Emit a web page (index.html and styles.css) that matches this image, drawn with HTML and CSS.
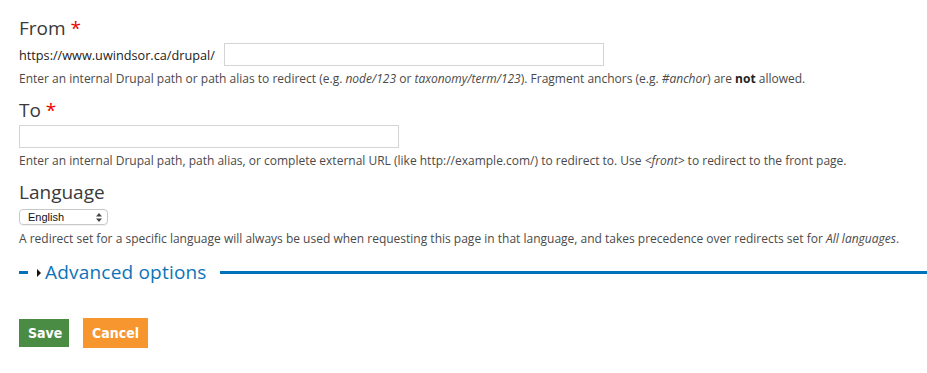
FILE: index.html
```html
<!DOCTYPE html>
<html>
<head>
<meta charset="utf-8">
<link rel="stylesheet" href="styles.css">
</head>
<body>
<form class="form">
  <div class="field">
    <label class="label">From <span class="req">*</span></label>
    <div class="prefix-row">
      <span class="prefix">https://www.uwindsor.ca/drupal/</span>
      <input class="text wide" type="text">
    </div>
    <div class="desc">Enter an internal Drupal path or path alias to redirect (e.g. <em>node/123</em> or <em>taxonomy/term/123</em>). Fragment anchors (e.g. <em>#anchor</em>) are <strong>not</strong> allowed.</div>
  </div>
  <div class="field">
    <label class="label">To <span class="req">*</span></label>
    <input class="text to" type="text">
    <div class="desc">Enter an internal Drupal path, path alias, or complete external URL (like http://example.com/) to redirect to. Use <em>&lt;front&gt;</em> to redirect to the front page.</div>
  </div>
  <div class="field">
    <label class="label">Language</label>
    <div class="select">
      <span>English</span>
      <svg width="6" height="9" viewBox="0 0 6 9"><path d="M3 0 L6 3.5 H0 Z M0 5.5 H6 L3 9 Z" fill="#444"/></svg>
    </div>
    <div class="desc lang-desc">A redirect set for a specific language will always be used when requesting this page in that language, and takes precedence over redirects set for <em>All languages</em>.</div>
  </div>
  <div class="advanced">
    <span class="dash"></span>
    <span class="tri"></span>
    <span class="adv-text">Advanced options</span>
    <span class="line"></span>
  </div>
  <div class="actions">
    <button type="button" class="btn save">Save</button>
    <button type="button" class="btn cancel">Cancel</button>
  </div>
</form>
</body>
</html>
```
FILE: styles.css
```css
html, body { margin: 0; padding: 0; background: #fff; }
body { font-family: "Open Sans", "Liberation Sans", sans-serif; color: #222; }
.form { padding: 15px 0 0 19px; }
.field { margin-bottom: 10px; }
.label { display: block; font-size: 19px; line-height: 26px; color: #3a3a3a; font-weight: 400; margin-bottom: 2px; }
.req { color: #e00; }
.prefix-row { display: flex; align-items: center; }
.prefix { font-size: 12.7px; color: #222; margin-right: 9px; white-space: nowrap; }
.text { box-sizing: border-box; height: 23px; border: 1px solid #d4d4d4; border-radius: 0; padding: 0 4px; margin: 0; font-size: 13px; outline: none; }
.wide { width: 380px; }
.to { width: 380px; display: block; }
.desc { font-size: 12px; line-height: 16px; color: #4a4a4a; margin-top: 5px; }
.lang-desc { margin-top: 6px; }
.desc strong { color: #222; }
.select { box-sizing: border-box; width: 89px; height: 16px; border: 1px solid #c8c8c8; border-radius: 4px; display: flex; align-items: center; justify-content: space-between; padding: 0 5px 0 8px; font-family: "Liberation Sans", Arial, sans-serif; font-size: 11px; color: #111; margin-top: 4px; box-shadow: 0 1px 1px rgba(0,0,0,0.06); }
.advanced { display: flex; align-items: center; margin-top: 11px; height: 28px; }
.dash { width: 9px; height: 3px; background: #0072ba; margin-right: 9px; }
.tri { width: 0; height: 0; border-left: 4px solid #111; border-top: 4px solid transparent; border-bottom: 4px solid transparent; margin-right: 4px; margin-top: 1px; }
.adv-text { font-size: 19px; color: #0c74b9; line-height: 28px; letter-spacing: 0.2px; }
.line { flex: 1; height: 3px; background: #0072ba; margin-left: 13px; }
.actions { display: flex; gap: 14px; margin-top: 33px; align-items: flex-start; }
.btn { border: none; color: #fff; font-family: "DejaVu Sans Condensed", "Open Sans", sans-serif; font-weight: bold; font-size: 14px; height: 28px; padding: 0 9px; margin: 0; cursor: pointer; }
.save { background: #4b8c44; width: 50px; }
.cancel { background: #f7952f; width: 65px; height: 30px; margin-top: -1px; }
```
